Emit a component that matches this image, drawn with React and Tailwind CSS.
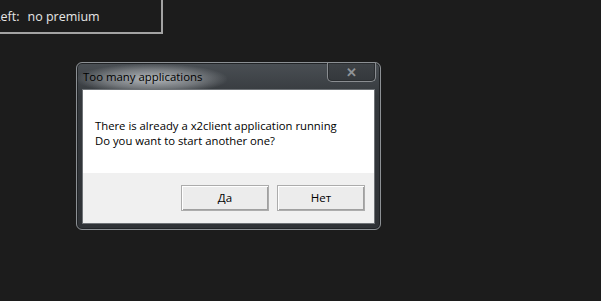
import React from "react";

const font = { fontFamily: '"Open Sans", "Noto Sans", sans-serif' };

const WinButton = ({ label }) => (
  <button className="w-[88px] h-[26px] bg-[#ececec] border border-[#acacac] shadow-[inset_1px_1px_0_#ffffff,inset_-1px_-1px_0_#a0a0a0] text-[11.5px] text-black flex items-center justify-center">
    {label}
  </button>
);

const App = () => {
  return (
    <div
      className="w-[601px] h-[301px] bg-[#1c1c1c] overflow-hidden"
      style={font}
    >
      <div className="-ml-[7px] -mt-[2px] w-[170px] h-[36px] border-r-2 border-b-2 border-[#a3a3a3] flex items-center pl-[1px] pt-[4px] text-[12.5px] text-[#e6e6e6]">
        <span>Left:</span>
        <span className="ml-[8px]">no premium</span>
      </div>

      <div className="pl-[76px] pt-[28px]">
        <div className="relative w-[305px] h-[168px] rounded-[6px] border border-[#8c9094] bg-[linear-gradient(180deg,#4a4f54_0%,#35393d_20%,#2f3236_100%)] shadow-[inset_0_0_0_1px_#202326] flex flex-col px-[5px] pb-[5px]">
          <div className="pointer-events-none absolute left-[0px] top-[1px] w-[150px] h-[30px] rounded-[15px] bg-[radial-gradient(ellipse_at_center,rgba(200,204,208,0.85)_0%,rgba(160,164,168,0.55)_45%,rgba(80,84,88,0)_72%)]" />
          <div className="relative h-[26px] flex items-center">
            <span className="ml-[1px] mt-[1px] text-[11.4px] text-black">
              Too many applications
            </span>
            <div className="ml-auto -mr-[1px] self-start w-[49px] h-[19px] rounded-b-[5px] border border-t-0 border-[#8a8d91] shadow-[inset_0_0_0_1px_#2a2d30] bg-[linear-gradient(180deg,#3e4246,#34383c)] flex items-center justify-center">
              <span className="text-[13px] font-bold text-[#8f9397] leading-none">
                ✕
              </span>
            </div>
          </div>
          <div className="relative flex-1 border border-[#6f7377] bg-[#f0f0f0] flex flex-col">
            <div className="h-[83px] bg-white pl-[12px] pt-[28px] text-[11.3px] leading-[15px] text-black">
              <div>There is already a x2client application running</div>
              <div>Do you want to start another one?</div>
            </div>
            <div className="flex-1 flex items-start justify-end gap-[8px] pt-[12px] pr-[9px]">
              <WinButton label="Да" />
              <WinButton label="Нет" />
            </div>
          </div>
        </div>
      </div>
    </div>
  );
};

export default App;
